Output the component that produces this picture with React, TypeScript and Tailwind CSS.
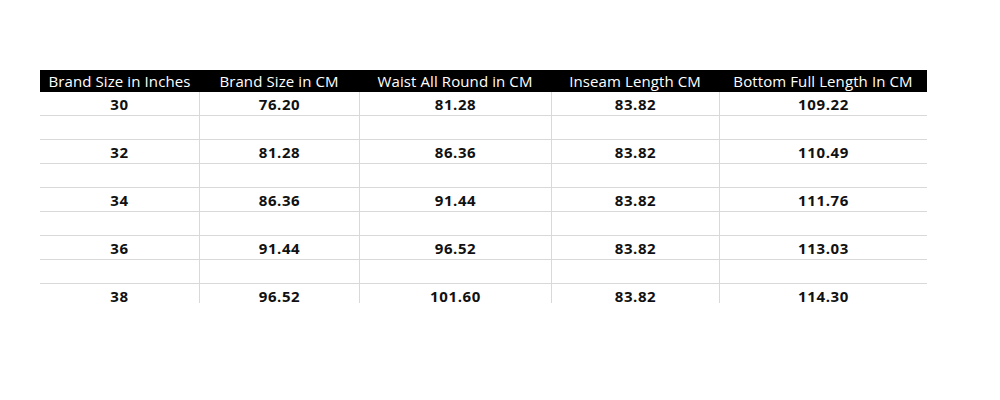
const headers = [
  "Brand Size in Inches",
  "Brand Size in CM",
  "Waist All Round in CM",
  "Inseam Length CM",
  "Bottom Full Length In CM",
];

const rows: (string[] | null)[] = [
  ["30", "76.20", "81.28", "83.82", "109.22"],
  null,
  ["32", "81.28", "86.36", "83.82", "110.49"],
  null,
  ["34", "86.36", "91.44", "83.82", "111.76"],
  null,
  ["36", "91.44", "96.52", "83.82", "113.03"],
  null,
  ["38", "96.52", "101.60", "83.82", "114.30"],
];

const cols = "grid grid-cols-[159px_160px_192px_168px_208px]";

export default function App() {
  return (
    <div
      className="h-[400px] w-[1000px] bg-white pt-[70px] pl-[40px]"
      style={{ fontFamily: "'Open Sans', 'Liberation Sans', sans-serif" }}
    >
      <div className="w-[887px]">
        <div className={`${cols} h-[22px] bg-black text-[15px] leading-[22px] tracking-[0.1px] text-white`}>
          {headers.map((h) => (
            <div key={h} className="text-center">
              {h}
            </div>
          ))}
        </div>
        {rows.map((r, i) => {
          const last = i === rows.length - 1;
          return (
            <div
              key={i}
              className={`${cols} ${
                last ? "h-[19px]" : "h-[24px] border-b border-[#d9d9d9]"
              } text-[15px] font-bold tracking-[0.6px] text-[#111]`}
            >
              {(r ?? ["", "", "", "", ""]).map((v, j) => (
                <div
                  key={j}
                  className={`flex h-full items-center justify-center ${
                    j > 0 ? "border-l border-[#d9d9d9]" : ""
                  } ${last ? "pt-[5px] leading-[12px]" : "pt-[1px]"}`}
                >
                  {v}
                </div>
              ))}
            </div>
          );
        })}
      </div>
    </div>
  );
}
